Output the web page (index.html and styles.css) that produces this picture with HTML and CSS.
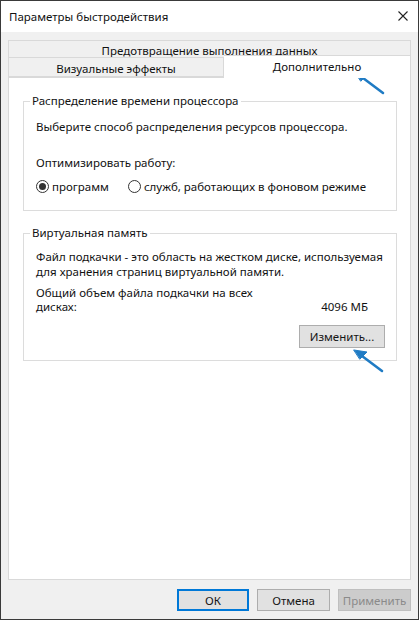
FILE: index.html
```html
<!DOCTYPE html>
<html lang="ru">
<head>
<meta charset="utf-8">
<title>Параметры быстродействия</title>
<link rel="stylesheet" href="styles.css">
</head>
<body>
<div class="window">
  <div class="titlebar">
    <span class="title">Параметры быстродействия</span>
    <svg class="close" width="10" height="10" viewBox="0 0 10 10"><path d="M0.5 0.5 L9.5 9.5 M9.5 0.5 L0.5 9.5" stroke="#222" stroke-width="1.1" fill="none"/></svg>
  </div>
  <div class="body">
    <div class="tabs">
      <div class="tabrow back">
        <div class="tab wide">Предотвращение выполнения данных</div>
      </div>
      <div class="tabrow front">
        <div class="tab first">Визуальные эффекты</div>
        <div class="tab active">Дополнительно</div>
      </div>
    </div>
    <div class="panel">
      <fieldset class="group g1">
        <legend>Распределение времени процессора</legend>
        <p class="line l1">Выберите способ распределения ресурсов процессора.</p>
        <p class="line l2">Оптимизировать работу:</p>
        <div class="radios">
          <label class="radio"><span class="dot checked"></span>программ</label>
          <label class="radio r2"><span class="dot"></span>служб, работающих в фоновом режиме</label>
        </div>
      </fieldset>
      <fieldset class="group g2">
        <legend>Виртуальная память</legend>
        <p class="line l3">Файл подкачки - это область на жестком диске, используемая<br>для хранения страниц виртуальной памяти.</p>
        <div class="total">
          <span>Общий объем файла подкачки на всех<br>дисках:</span>
          <span class="size">4096 МБ</span>
        </div>
        <div class="btnrow"><button class="btn change">Изменить...</button></div>
      </fieldset>
    </div>
    <div class="footer">
      <button class="btn ok">ОК</button>
      <button class="btn">Отмена</button>
      <button class="btn disabled">Применить</button>
    </div>
  </div>
  <svg class="arrows" width="419" height="620" viewBox="0 0 419 620">
    <g fill="#1f7bc4" stroke="#1f7bc4" stroke-linecap="round" stroke-linejoin="round">
      <path d="M383 93 L363 78" stroke-width="2.6" fill="none"/>
      <path d="M355 72 L368 74 L361 81 Z" stroke-width="1"/>
      <path d="M382 371 L362 356" stroke-width="2.6" fill="none"/>
      <path d="M354 350 L367 352 L360 359 Z" stroke-width="1"/>
    </g>
  </svg>
</div>
</body>
</html>
```

FILE: styles.css
```css
* { box-sizing: border-box; }
html, body { margin: 0; padding: 0; background: #fff; }
body {
  font-family: "Noto Sans", "Open Sans", sans-serif;
  font-size: 11.5px;
  color: #121212;
}
.window {
  position: relative;
  width: 419px;
  height: 620px;
  border: 1px solid #3a3a3a;
  background: #f0f0f0;
  display: flex;
  flex-direction: column;
}
.titlebar {
  height: 31px;
  background: #fff;
  display: flex;
  align-items: center;
  justify-content: space-between;
  padding: 0 10px 1px 8px;
}
.title { font-size: 11.5px; color: #111; }
.close { display: block; }
.body {
  flex: 1;
  display: flex;
  flex-direction: column;
  padding: 8px 7px 0 7px;
}
.tabs { display: flex; flex-direction: column; }
.tabrow { display: flex; height: 17px; }
.tabrow.front { height: 20px; align-items: flex-end; }
.tab {
  background: #f0f0f0;
  border: 1px solid #d9d9d9;
  display: flex;
  align-items: center;
  justify-content: center;
  line-height: 14px;
  white-space: nowrap;
}
.tab.wide { flex: 1; border-bottom: none; padding-top: 3px; }
.tab.first { width: 216px; height: 20px; padding-top: 3px; }
.tab.active {
  flex: 1;
  height: 23px;
  margin-bottom: -1px;
  background: #fff;
  border-bottom: none;
  border-left: none;
  position: relative;
  z-index: 1;
  padding-bottom: 1px;
}
.panel {
  height: 503px;
  background: #fff;
  border: 1px solid #d9d9d9;
  padding: 15px 13px 0 14px;
}
.group {
  margin: 0;
  border: 1px solid #dcdcdc;
  padding: 0 10px 0 12px;
  min-width: 0;
}
.group legend {
  padding: 0 2px;
  margin-left: -6px;
  line-height: 16px;
}
.line { margin: 0; line-height: 15px; white-space: nowrap; }
.l1 { margin-top: 10px; }
.l2 { margin-top: 21px; }
.radios { display: flex; margin-top: 9px; height: 15px; align-items: center; margin-bottom: 16px; white-space: nowrap; }
.radio { display: flex; align-items: center; }
.r2 { margin-left: 19px; }
.dot {
  width: 13px; height: 13px;
  border: 1px solid #333;
  border-radius: 50%;
  margin-right: 3px;
  display: flex; align-items: center; justify-content: center;
}
.dot.checked::after {
  content: "";
  width: 7px; height: 7px;
  border-radius: 50%;
  background: #333;
}
.g2 { margin-top: 14px; }
.l3 { margin-top: 8px; }
.total {
  display: flex;
  justify-content: space-between;
  align-items: flex-end;
  margin-top: 7px;
  line-height: 14px;
  padding-right: 18px;
  white-space: nowrap;
}
.btnrow { display: flex; justify-content: flex-end; margin-top: 11px; margin-bottom: 12px; margin-right: 1px; }
.btn {
  font-family: inherit;
  font-size: 11.5px;
  color: #151515;
  background: #e1e1e1;
  border: 1px solid #adadad;
  height: 23px;
  padding: 0;
  width: 73px;
}
.btn.change { width: 86px; }
.footer {
  display: flex;
  justify-content: flex-end;
  gap: 8px;
  margin-top: 9px;
}
.footer .btn { height: 22px; }
.btn.ok { border: 2px solid #0078d7; width: 72px; }
.btn.disabled { background: #cccccc; border-color: #bfbfbf; color: #8a8a8a; }
.arrows { position: absolute; left: -1px; top: -1px; pointer-events: none; }
```
